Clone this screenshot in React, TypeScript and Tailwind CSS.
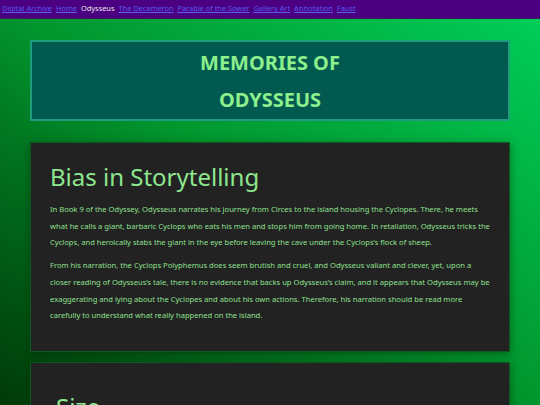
export default function App() {
  const links = [
    { label: "Digital Archive", active: false },
    { label: "Home", active: false },
    { label: "Odysseus", active: true },
    { label: "The Decameron", active: false },
    { label: "Parable of the Sower", active: false },
    { label: "Gallery Art", active: false },
    { label: "Annotation", active: false },
    { label: "Faust", active: false },
  ];

  return (
    <div
      className="min-h-[405px] h-[405px] overflow-hidden bg-gradient-to-tr from-[#003a08] via-[#02962e] to-[#00d05a]"
      style={{ fontFamily: '"Noto Sans", "Open Sans", sans-serif' }}
    >
      {/* ナビゲーション */}
      <nav className="h-[19px] bg-[#4b0082] border-b border-[#3a1a5a] flex items-center gap-[4px] px-[2px] text-[7.4px]">
        {links.map((l) =>
          l.active ? (
            <span key={l.label} className="text-[#e8e8e8]">
              {l.label}
            </span>
          ) : (
            <a key={l.label} href="#" className="text-[#5a5aee] underline">
              {l.label}
            </a>
          )
        )}
      </nav>

      <main className="mx-[30px] pt-[21px]">
        {/* タイトル */}
        <header className="h-[81px] bg-[#02594f] border-2 border-[#1e9c7c] flex flex-col items-center justify-center">
          <h1 className="text-[20px] font-bold text-[#8cf08c] leading-[37px] text-center">
            MEMORIES OF
            <br />
            ODYSSEUS
          </h1>
        </header>

        <section className="mt-[21px] h-[210px] bg-[#222222] border border-[#0b5a22] shadow-[0_2px_8px_rgba(0,40,0,0.5)] pl-[19px] pr-[4px] pt-[18px]">
          <h2 className="text-[24px] leading-[32px] text-[#8ee68e]">Bias in Storytelling</h2>
          <p className="mt-[8px] text-[7.6px] leading-[16.7px] text-[#8ee08e] whitespace-nowrap">
            In Book 9 of the Odyssey, Odysseus narrates his journey from Circes to the island housing the Cyclopes. There, he meets
            <br />
            what he calls a giant, barbaric Cyclops who eats his men and stops him from going home. In retaliation, Odysseus tricks the
            <br />
            Cyclops, and heroically stabs the giant in the eye before leaving the cave under the Cyclops’s flock of sheep.
          </p>
          <p className="mt-[6px] text-[7.6px] leading-[16.7px] text-[#8ee08e] whitespace-nowrap">
            From his narration, the Cyclops Polyphemus does seem brutish and cruel, and Odysseus valiant and clever, yet, upon a
            <br />
            closer reading of Odysseus’s tale, there is no evidence that backs up Odysseus’s claim, and it appears that Odysseus may be
            <br />
            exaggerating and lying about the Cyclopes and about his own actions. Therefore, his narration should be read more
            <br />
            carefully to understand what really happened on the island.
          </p>
        </section>

        <section className="mt-[10px] h-[120px] bg-[#222222] border border-[#0b5a22] shadow-[0_2px_8px_rgba(0,40,0,0.5)] px-[25px] pt-[28px]">
          <h2 className="text-[24px] leading-[32px] text-[#8ee68e]">Size</h2>
        </section>
      </main>
    </div>
  );
}
